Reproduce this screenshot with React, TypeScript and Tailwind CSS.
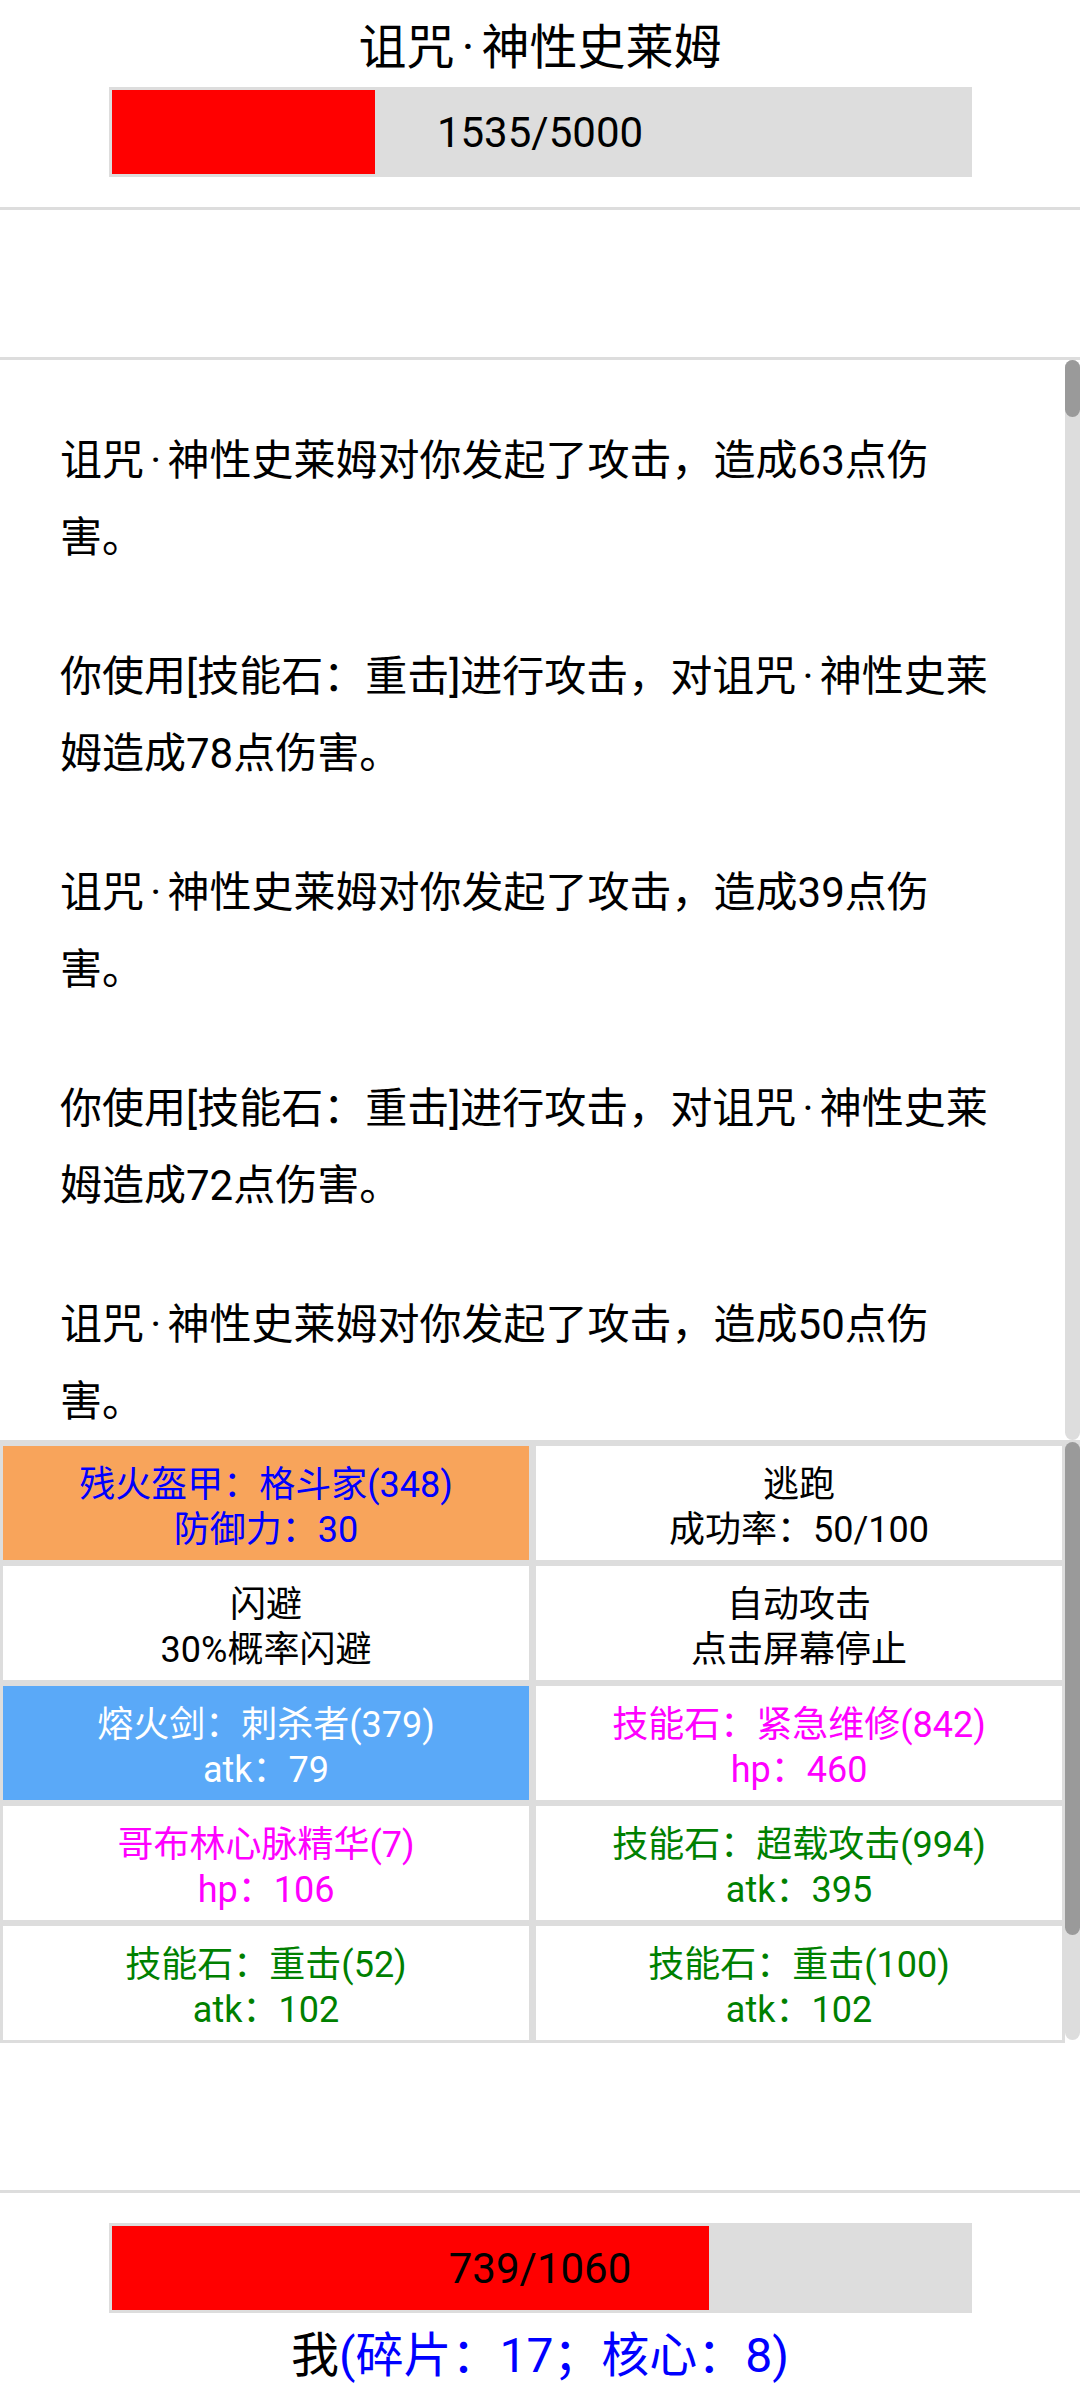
import React from "react";

type Cell = { l1: string; l2: string; bg: string; fg: string };

const cells: Cell[] = [
  { l1: "残火盔甲：格斗家(348)", l2: "防御力：30", bg: "bg-[#f8a45b]", fg: "text-[#0000ff]" },
  { l1: "逃跑", l2: "成功率：50/100", bg: "bg-white", fg: "text-black" },
  { l1: "闪避", l2: "30%概率闪避", bg: "bg-white", fg: "text-black" },
  { l1: "自动攻击", l2: "点击屏幕停止", bg: "bg-white", fg: "text-black" },
  { l1: "熔火剑：刺杀者(379)", l2: "atk：79", bg: "bg-[#5aa9f8]", fg: "text-white" },
  { l1: "技能石：紧急维修(842)", l2: "hp：460", bg: "bg-white", fg: "text-[#ff00ff]" },
  { l1: "哥布林心脉精华(7)", l2: "hp：106", bg: "bg-white", fg: "text-[#ff00ff]" },
  { l1: "技能石：超载攻击(994)", l2: "atk：395", bg: "bg-white", fg: "text-[#008000]" },
  { l1: "技能石：重击(52)", l2: "atk：102", bg: "bg-white", fg: "text-[#008000]" },
  { l1: "技能石：重击(100)", l2: "atk：102", bg: "bg-white", fg: "text-[#008000]" },
];

const logs: [string, string][] = [
  ["诅咒·神性史莱姆对你发起了攻击，造成63点伤", "害。"],
  ["你使用[技能石：重击]进行攻击，对诅咒·神性史莱", "姆造成78点伤害。"],
  ["诅咒·神性史莱姆对你发起了攻击，造成39点伤", "害。"],
  ["你使用[技能石：重击]进行攻击，对诅咒·神性史莱", "姆造成72点伤害。"],
  ["诅咒·神性史莱姆对你发起了攻击，造成50点伤", "害。"],
];

function Dotted({ text }: { text: string }) {
  const parts = text.split("·");
  return (
    <>
      {parts.map((p, i) => (
        <React.Fragment key={i}>
          {i > 0 && <span className="px-[0.15em]">·</span>}
          {p}
        </React.Fragment>
      ))}
    </>
  );
}

function Bar({ cur, max }: { cur: number; max: number }) {
  return (
    <div className="mx-auto w-[863px] h-[90px] bg-[#dddddd] p-[3px]">
      <div className="grid h-full w-full">
        <div
          className="col-start-1 row-start-1 h-full bg-[#ff0000]"
          style={{ width: `${(cur / max) * 100}%` }}
        />
        <div className="col-start-1 row-start-1 flex items-center justify-center text-[42px] text-black">
          {cur}/{max}
        </div>
      </div>
    </div>
  );
}

export default function App() {
  return (
    <div className="w-[1080px] h-[2400px] bg-white flex flex-col overflow-hidden font-[family-name:Roboto,'Noto_Sans_CJK_SC',sans-serif] text-black">
      {/* header */}
      <div className="pt-[18px] pb-[30px] border-b-[3px] border-[#dddddd]">
        <div className="text-center text-[48px] leading-[60px]">
          <Dotted text="诅咒·神性史莱姆" />
        </div>
        <div className="mt-[9px]">
          <Bar cur={1535} max={5000} />
        </div>
      </div>

      {/* empty status area */}
      <div className="h-[150px] shrink-0 border-b-[3px] border-[#dddddd]" />

      {/* log */}
      <div className="h-[1080px] shrink-0 flex">
        <div className="flex-1 overflow-hidden pl-[60px] pt-[62px] flex flex-col gap-[62px]">
          {logs.map((p, i) => (
            <p key={i} className="text-[42px] leading-[77px] whitespace-nowrap">
              <Dotted text={p[0]} />
              <br />
              {p[1]}
            </p>
          ))}
        </div>
        <div className="w-[15px] h-full">
          <div className="h-full rounded-full bg-[#dddddd] flex flex-col">
            <div className="h-[57px] rounded-full bg-[#9a9a9a]" />
          </div>
        </div>
      </div>

      {/* action grid */}
      <div className="h-[603px] shrink-0 flex">
        <div className="w-[1065px] h-full bg-[#dddddd] overflow-hidden pt-[6px] px-[3px]">
          <div className="grid grid-cols-2 gap-x-[7px] gap-y-[6px]">
            {cells.map((c, i) => (
              <div
                key={i}
                className={`h-[114px] pt-[17px] flex flex-col items-center text-[36px] leading-[45px] whitespace-nowrap ${c.bg} ${c.fg}`}
              >
                <div>{c.l1}</div>
                <div>{c.l2}</div>
              </div>
            ))}
          </div>
        </div>
        <div className="w-[15px] h-[600px] bg-[#dddddd] rounded-b-full pt-[2px]">
          <div className="h-[493px] rounded-full bg-[#9a9a9a]" />
        </div>
      </div>

      {/* empty area */}
      <div className="h-[150px] shrink-0 border-b-[3px] border-[#dddddd]" />

      {/* player */}
      <div className="pt-[30px]">
        <Bar cur={739} max={1060} />
        <div className="mt-[13px] text-center text-[48px] leading-[60px]">
          <span className="text-black">我</span>
          <span className="text-[#0000ff]">(碎片：17；核心：8)</span>
        </div>
      </div>
    </div>
  );
}
